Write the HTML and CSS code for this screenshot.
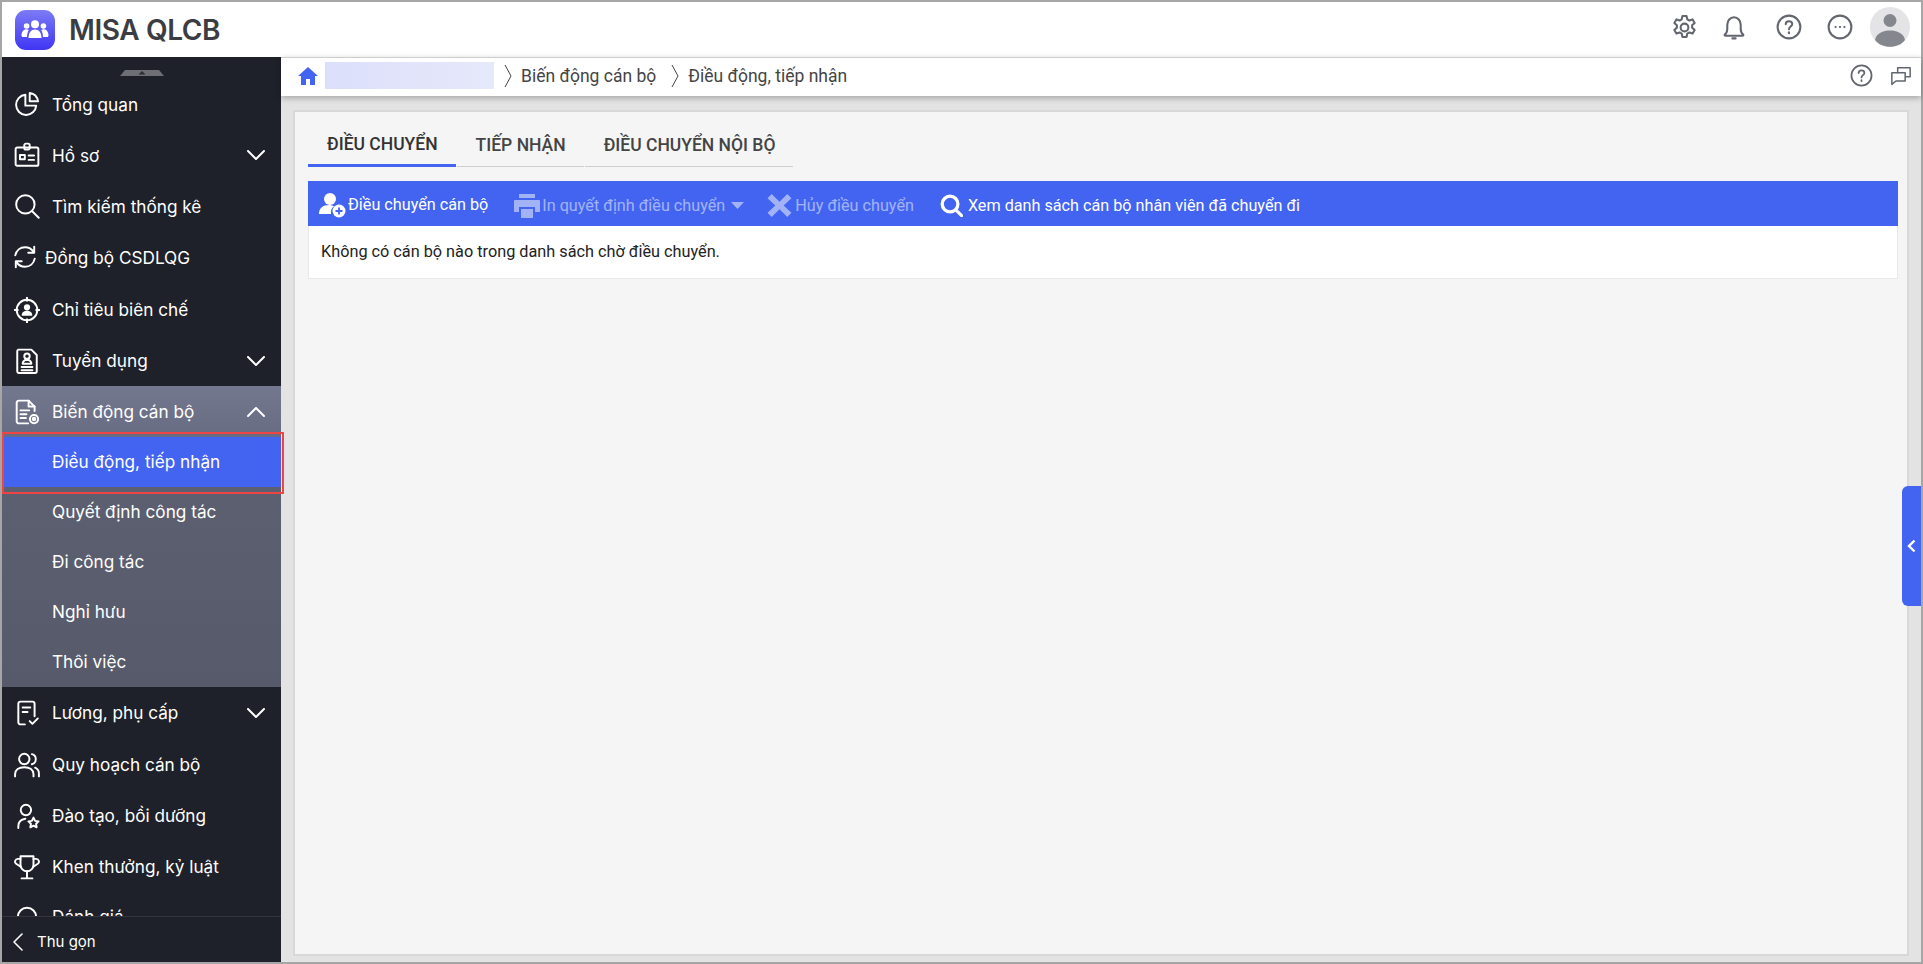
FILE: index.html
```html
<!DOCTYPE html>
<html lang="vi">
<head>
    <meta charset="UTF-8">
    <meta name="viewport" content="width=device-width, initial-scale=1.0">
    <title>MISA QLCB</title>
    <link rel="stylesheet" href="styles.css">
</head>
<body>
<div class="app">
    <header class="topbar">
        <div class="logo">
            <svg viewBox="0 0 40 40" width="40" height="40">
                <defs>
                    <linearGradient id="logoBg" x1="0" y1="0" x2="0" y2="1">
                        <stop offset="0" stop-color="#7d7bf5"/>
                        <stop offset="1" stop-color="#3f35f5"/>
                    </linearGradient>
                </defs>
                <rect width="40" height="40" rx="11" fill="url(#logoBg)"/>
                <g fill="#fff">
                    <circle cx="20" cy="14.2" r="4"/>
                    <circle cx="11.6" cy="16" r="2.8"/>
                    <circle cx="28.4" cy="16" r="2.8"/>
                    <path d="M13.5 28c0-5.5 2.6-8.6 6.5-8.6s6.500 3.100 6.500 8.600z"/>
                    <path d="M8 27c-1 0-1.500-.6-1.500-1.500 0-3.600 2-6.200 5-6.200 1 0 1.600.2 2.200.6-1 1.800-1.600 4.200-1.700 7.100z"/>
                    <path d="M32 27c1 0 1.500-.6 1.500-1.500 0-3.600-2-6.200-5-6.200-1 0-1.600.2-2.200.6 1 1.800 1.600 4.200 1.700 7.100z"/>
                </g>
            </svg>
            <span class="logo-text">MISA QLCB</span>
        </div>
        <div class="top-actions">
            <svg class="ic top-ic gear" viewBox="0 0 24 24" width="29" height="29"><circle cx="12" cy="12" r="3.200"/><path d="M10.300 2.500h3.400l.6 2.800 1.700.9 2.700-.9 1.700 3-2.100 1.900v1.900l2.100 1.900-1.700 3-2.700-.9-1.700.9-.6 2.800h-3.400l-.6-2.800-1.700-.9-2.700.9-1.700-3 2.100-1.900v-1.900L3.600 8.300l1.700-3 2.700.9 1.700-.9z"/></svg>
            <svg class="ic top-ic bell" viewBox="0 0 24 24" width="26" height="26"><path d="M3.500 19c1.800-1.500 2.300-3 2.300-5.500V10c0-3.800 2.600-7 6.200-7s6.200 3.200 6.200 7v3.500c0 2.500.5 4 2.300 5.500 .4.600 0 1-.6 1H4.100c-.6 0-1-.4-.6-1z"/><path d="M10.500 22.500h3"/></svg>
            <svg class="ic top-ic help" viewBox="0 0 24 24" width="26" height="26"><circle cx="12" cy="12" r="10.500"/><path d="M9 9.500c0-1.700 1.300-2.800 3-2.800s3 1.100 3 2.600c0 2.200-3 2.400-3 4.700"/><path d="M12 16.800v1"/></svg>
            <svg class="ic top-ic dots" viewBox="0 0 24 24" width="26" height="26"><circle cx="12" cy="12" r="10.500"/><path d="M7.800 12h.2M11.900 12h.2M16 12h.2"/></svg>
            <div class="avatar">
                <svg viewBox="0 0 40 40" width="40" height="40"><circle cx="20" cy="20" r="20" fill="#e4e4e6"/><circle cx="20" cy="13.500" r="6.500" fill="#85878f"/><path d="M5 33c1.500-7 8-9.500 15-9.500s13.500 2.500 15 9.500c-3.500 4.500-9 6.800-15 6.800S8.500 37.500 5 33z" fill="#85878f"/></svg>
            </div>
        </div>
    </header>

    <div class="body-row">
        <aside class="sidebar">
            <div class="menu">
                <svg class="handle" viewBox="0 0 44 6" width="44" height="6"><path d="M5 0h34l5 6H0z" fill="#6d6f75"/><path d="M22 1l3.500 3.500h-7z" fill="#2a2d34"/></svg>

                <a class="item item-up"><svg class="ic side-ic" viewBox="0 0 24 24" width="26" height="26"><path d="M10.500 3.500a9.300 9.300 0 1 0 10 10h-10z"/><path d="M14.500 1.800c4 .6 7 3.500 7.700 7.700h-7.700z"/></svg><span>Tổng quan</span></a>

                <a class="item item-up"><svg class="ic side-ic" viewBox="0 0 24 24" width="26" height="26"><rect x="1.500" y="5" width="21" height="17" rx="1.500"/><rect x="9.500" y="1.500" width="5" height="5.500" rx="1.500"/><rect x="5.500" y="12" width="4.500" height="4"/><path d="M13.500 12.500h5M13.500 16.500h5"/></svg><span>Hồ sơ</span><svg class="ic arrow" viewBox="0 0 18 10" width="18" height="10"><path d="M1 1l8 8 8-8"/></svg></a>

                <a class="item item-up"><svg class="ic side-ic" viewBox="0 0 24 24" width="26" height="26"><circle cx="10.500" cy="10.500" r="8.500"/><path d="M16.800 16.800l6 6"/></svg><span>Tìm kiếm thống kê</span></a>

                <a class="item item-up item-sync"><svg class="ic side-ic" viewBox="0 0 24 24" width="26" height="26"><path d="M3 10.500C4 6 7.500 3 12 3c3.500 0 6.300 1.700 8 4.500"/><path d="M20.500 2.500v5.500H15"/><path d="M21 13.500C20 18 16.500 21 12 21c-3.500 0-6.300-1.700-8-4.500"/><path d="M3.500 21.500V16H9"/></svg><span>Đồng bộ CSDLQG</span></a>

                <a class="item"><svg class="ic side-ic" viewBox="0 0 24 24" width="26" height="26"><circle cx="12" cy="12" r="9.500"/><path d="M12 .5v3M12 20.500v3M.5 12h3M20.500 12h3"/><circle cx="12" cy="9.500" r="2" fill="currentColor"/><path d="M8 16.500c.5-2 2-2.800 4-2.800s3.500.8 4 2.800z" fill="currentColor"/></svg><span>Chỉ tiêu biên chế</span></a>

                <a class="item"><svg class="ic side-ic" viewBox="0 0 24 24" width="26" height="26"><path d="M4 1.500h12l5 5v15a1.500 1.500 0 0 1-1.500 1.500h-15A1.500 1.500 0 0 1 3 21.500V3a1.500 1.500 0 0 1 1-1.500z"/><circle cx="12" cy="7.500" r="2.500"/><path d="M8 14.500c0-2 1.500-3 2.500-3.500h3c1 .5 2.500 1.500 2.500 3.500zM7 17.500h10M7 20.500h10"/></svg><span>Tuyển dụng</span><svg class="ic arrow" viewBox="0 0 18 10" width="18" height="10"><path d="M1 1l8 8 8-8"/></svg></a>

                <div class="group">
                    <a class="item item-open"><svg class="ic side-ic" viewBox="0 0 24 24" width="26" height="26"><path d="M13 22.500H4.500A2 2 0 0 1 2.500 20.500V3.500a2 2 0 0 1 2-2h9l5.500 5.500v4"/><path d="M13.500 1.500v5.500H19"/><path d="M6 10.500h8M6 14h5.500M6 17.500h5"/><circle cx="18.500" cy="18.500" r="1.200"/><circle cx="18.500" cy="18.500" r="3.800"/></svg><span>Biến động cán bộ</span><svg class="ic arrow" viewBox="0 0 18 10" width="18" height="10"><path d="M1 9l8-8 8 8"/></svg></a>
                    <a class="sub sub-active">Điều động, tiếp nhận</a>
                    <a class="sub">Quyết định công tác</a>
                    <a class="sub">Đi công tác</a>
                    <a class="sub">Nghỉ hưu</a>
                    <a class="sub">Thôi việc</a>
                </div>

                <a class="item"><svg class="ic side-ic" viewBox="0 0 24 24" width="26" height="26"><path d="M10 22.500H6a2 2 0 0 1-2-2V3.500a2 2 0 0 1 2-2h11a2 2 0 0 1 2 2V15"/><path d="M8 7h7M8 11h4.500"/><path d="M14.500 19.500l2.500 2.500 5-5"/></svg><span>Lương, phụ cấp</span><svg class="ic arrow" viewBox="0 0 18 10" width="18" height="10"><path d="M1 1l8 8 8-8"/></svg></a>

                <a class="item item-down"><svg class="ic side-ic" viewBox="0 0 24 24" width="26" height="26"><circle cx="9.500" cy="6.500" r="4.800"/><path d="M1 22.500v-2c0-4 3.500-6.500 8.500-6.500s8.500 2.500 8.500 6.500v2"/><path d="M16.500 2a4.800 4.800 0 0 1 0 9.300M19.500 14.500c2.300 1 3.500 3 3.500 5.500v2.500"/></svg><span>Quy hoạch cán bộ</span></a>

                <a class="item item-down"><svg class="ic side-ic" viewBox="0 0 24 24" width="26" height="26"><circle cx="11" cy="6.500" r="4.800"/><path d="M4 23v-1.500c0-3.800 2.500-6.500 6.500-7"/><path d="M18 13.500l1.500 3 3.200.5-2.300 2.200.5 3.200-2.900-1.500-2.900 1.500.5-3.200-2.300-2.200 3.200-.5z" fill="none"/></svg><span>Đào tạo, bồi dưỡng</span></a>

                <a class="item item-down"><svg class="ic side-ic" viewBox="0 0 24 24" width="26" height="26"><path d="M6 2h12v8a6 6 0 0 1-12 0z"/><path d="M6 4.500H3.500a2.500 2.500 0 0 0-1.500 4.500l4.500 3M18 4.500h2.500a2.500 2.500 0 0 1 1.500 4.500l-4.500 3"/><path d="M12 16v6M7 22.500h10"/></svg><span>Khen thưởng, kỷ luật</span></a>

                <a class="item"><svg class="ic side-ic" viewBox="0 0 24 24" width="26" height="26"><circle cx="12" cy="12" r="8.500"/></svg><span>Đánh giá</span></a>
            </div>
            <div class="side-foot">
                <svg class="ic foot-arrow" viewBox="0 0 11 18" width="11" height="18"><path d="M10 1L2 9l8 8"/></svg>
                <span>Thu gọn</span>
            </div>
        </aside>

        <main class="content">
            <nav class="crumbs">
                <svg class="home" viewBox="0 0 20 18" width="20" height="18"><path d="M10 0L0 9h3v9h5v-6h4v6h5V9h3z" fill="#4264f0"/></svg>
                <div class="blurred"></div>
                <svg class="sep" viewBox="0 0 8 24" width="8" height="24"><path d="M1 1l6 11-6 11"/></svg>
                <span>Biến động cán bộ</span>
                <svg class="sep" viewBox="0 0 8 24" width="8" height="24"><path d="M1 1l6 11-6 11"/></svg>
                <span>Điều động, tiếp nhận</span>
                <div class="crumb-right">
                    <svg class="ic crumb-ic" viewBox="0 0 24 24" width="23" height="23"><circle cx="12" cy="12" r="10.500"/><path d="M9 9.500c0-1.700 1.300-2.800 3-2.800s3 1.100 3 2.600c0 2.200-3 2.400-3 4.700"/><path d="M12 16.800v1"/></svg>
                    <svg class="ic crumb-ic" viewBox="0 0 24 24" width="20" height="20"><path d="M8 8V2h15v11h-5"/><path d="M1 8h16v10H6l-5 4z"/></svg>
                </div>
            </nav>

            <div class="panel-wrap">
                <section class="panel">
                    <div class="tabs">
                        <div class="tab tab-active">ĐIỀU CHUYỂN</div>
                        <div class="tab">TIẾP NHẬN</div>
                        <div class="tab">ĐIỀU CHUYỂN NỘI BỘ</div>
                    </div>
                    <div class="toolbar">
                        <div class="tool tool-add">
                            <svg viewBox="0 0 27 26" width="27" height="26"><circle cx="11" cy="7" r="6" fill="#fff"/><path d="M0 22c0-6 4-9 10-9 2 0 4 .5 5 1.500-2.500 1.500-3.500 4-3 7.500z" fill="#fff"/><circle cx="20" cy="19" r="6.500" fill="#fff"/><path d="M20 15.500v7M16.500 19h7" stroke="#4264f0" stroke-width="1.800"/></svg>
                            <span>Điều chuyển cán bộ</span>
                        </div>
                        <div class="tool tool-off tool-print">
                            <svg viewBox="0 0 26 24" width="26" height="24"><path d="M5 0h16v4H5z M1 6h24a1 1 0 0 1 1 1v11h-5v-5H5v5H0V7a1 1 0 0 1 1-1z M7 15h12v9H7z" fill="#fff"/></svg>
                            <span>In quyết định điều chuyển</span>
                            <svg class="caret" viewBox="0 0 13 7" width="13" height="7"><path d="M0 0h13L6.500 7z" fill="#fff"/></svg>
                        </div>
                        <div class="tool tool-off tool-cancel">
                            <svg viewBox="0 0 24 24" width="25" height="25"><path d="M4.500 1L12 8.500 19.500 1 23.500 5 16 12l7.500 7-4 4L12 15.500 4.500 23l-4-4L8 12 .5 5z" fill="#fff"/></svg>
                            <span>Hủy điều chuyển</span>
                        </div>
                        <div class="tool tool-search">
                            <svg viewBox="0 0 24 24" width="23" height="23"><circle cx="10.500" cy="10.500" r="8.200" fill="none" stroke="#fff" stroke-width="3.400"/><path d="M16.500 16.500l6 6" stroke="#fff" stroke-width="3.400" stroke-linecap="round"/></svg>
                            <span>Xem danh sách cán bộ nhân viên đã chuyển đi</span>
                        </div>
                    </div>
                    <div class="empty">Không có cán bộ nào trong danh sách chờ điều chuyển.</div>
                </section>
                <div class="side-tab">
                    <svg viewBox="0 0 9 14" width="9" height="14"><path d="M7.500 1.500L2 7l5.500 5.500" fill="none" stroke="#fff" stroke-width="2.400"/></svg>
                </div>
            </div>
        </main>
    </div>
</div>
</body>
</html>
```

FILE: styles.css
```css
* {
    box-sizing: border-box;
}
body {
    margin: 0;
    font-family: Inter, Arial, sans-serif;
    overflow: hidden;
}
.app {
    height: 964px;
    border: 2px solid #a6a6a6;
    display: flex;
    flex-direction: column;
    background-color: #fff;
}
.ic {
    fill: none;
    stroke: currentColor;
    stroke-width: 1.8;
    stroke-linecap: round;
    stroke-linejoin: round;
    flex: none;
}

/* top bar */
.topbar {
    height: 55px;
    flex: none;
    display: flex;
    align-items: center;
    justify-content: space-between;
    padding: 0 11px 0 13px;
}
.logo {
    display: flex;
    align-items: center;
    gap: 14px;
}
.logo-text {
    font-family: Inter, sans-serif;
    font-size: 28px;
    font-weight: 600;
    letter-spacing: -0.4px;
    color: #3b3d42;
}
.top-actions {
    display: flex;
    align-items: center;
    margin-bottom: 5px;
    color: #62666e;
}
.top-ic {
    stroke-width: 1.9;
}
.gear {
    margin-right: 22px;
    stroke-width: 1.7;
}
.bell {
    margin-right: 29px;
}
.help {
    margin-right: 25px;
}
.dots {
    margin-right: 17px;
}
.avatar {
    height: 40px;
}

.body-row {
    flex: 1;
    min-height: 0;
    display: flex;
}

/* sidebar */
.sidebar {
    width: 279px;
    flex: none;
    display: flex;
    flex-direction: column;
    background-color: #1e2129;
    color: #fff;
}
.menu {
    flex: 1;
    min-height: 0;
    padding-top: 23px;
    position: relative;
}
.handle {
    position: absolute;
    top: 13px;
    left: 118px;
}
.item {
    height: 51px;
    display: flex;
    align-items: center;
    padding-left: 12px;
    font-size: 17.2px;
    color: #fff;
}
.item-up {
    padding-bottom: 3px;
}
.item-down {
    padding-top: 2px;
}
.side-ic {
    margin-right: 12px;
}
.item-sync {
    padding-left: 10px;
}
.item-sync .side-ic {
    margin-right: 7px;
}
.arrow {
    margin-left: auto;
    margin-right: 16px;
    stroke-width: 2;
}
.group {
    background-color: #585c6c;
    background-image: linear-gradient(#5e6274, #565a6a);
}
.item-open {
    background-image: linear-gradient(#74788f, #686c82);
}
.sub {
    display: flex;
    align-items: center;
    height: 50px;
    padding-left: 50px;
    padding-bottom: 2px;
    font-size: 17.2px;
    color: #fff;
    position: relative;
}
.sub-active {
    background-color: #4264f0;
}
.sub-active::after {
    content: "";
    position: absolute;
    left: 0;
    right: -3px;
    top: -5px;
    bottom: -7px;
    border: 2px solid #ef4444;
}
.side-foot {
    height: 46px;
    flex: none;
    position: relative;
    z-index: 1;
    display: flex;
    align-items: center;
    padding-left: 10px;
    padding-top: 4px;
    gap: 14px;
    background-color: #1e2129;
    border-top: 1px solid #33363e;
    font-size: 15px;
}
.foot-arrow {
    stroke-width: 1.6;
}

/* breadcrumb */
.content {
    flex: 1;
    min-width: 0;
    display: flex;
    flex-direction: column;
    background-color: #e3e3e3;
}
.crumbs {
    height: 39px;
    flex: none;
    display: flex;
    align-items: center;
    padding: 0 10px 3px 17px;
    background-color: #fff;
    border-top: 1px solid #cfcfcf;
    box-shadow: 0 2px 6px rgba(0, 0, 0, 0.28);
    position: relative;
    font-family: Roboto, sans-serif;
    font-size: 17.5px;
    color: #444;
}
.home {
    margin-right: 7px;
}
.blurred {
    width: 169px;
    height: 27px;
    margin-right: 10px;
    background-image: linear-gradient(90deg, #dcdffa, #e6e9fa);
}
.sep {
    fill: none;
    stroke: #444;
    stroke-width: 1;
    margin-right: 9px;
}
.crumbs span + .sep {
    margin-left: 15px;
}
.crumb-right {
    margin-left: auto;
    display: flex;
    align-items: center;
    gap: 18px;
    color: #62666e;
}

/* panel */
.panel-wrap {
    flex: 1;
    min-height: 0;
    padding: 14px 12px 6px 12px;
    position: relative;
}
.panel {
    height: 100%;
    background-color: #f5f5f5;
    border: 2px solid #d8d8d8;
    padding: 14px 9px 0 13px;
    font-family: Roboto, sans-serif;
}
.tabs {
    display: flex;
    gap: 1px;
    margin-bottom: 14px;
}
.tab {
    height: 41px;
    padding: 0 18px 3px 19px;
    display: flex;
    align-items: center;
    font-size: 17.5px;
    font-weight: 500;
    color: #444;
    border-bottom: 1px solid #cfcfcf;
}
.tab-active {
    color: #333;
    border-bottom: 3px solid #4264f0;
    padding-bottom: 2px;
}
.toolbar {
    height: 45px;
    display: flex;
    align-items: center;
    padding: 4px 0 0 11px;
    background-color: #4264f0;
    color: #fff;
    font-size: 16.2px;
}
.tool {
    display: flex;
    align-items: center;
    gap: 2px;
}
.tool-add {
    margin-top: -2px;
}
.tool-off {
    opacity: 0.5;
}
.tool-print {
    margin-left: 26px;
}
.caret {
    margin-left: 4px;
}
.tool-cancel {
    margin-left: 23px;
    gap: 3px;
}
.tool-search {
    margin-left: 26px;
    gap: 5px;
}
.empty {
    height: 53px;
    display: flex;
    align-items: center;
    padding: 0 0 2px 12px;
    background-color: #fff;
    border: 1px solid #e8e8e8;
    border-top: none;
    font-size: 16.25px;
    color: #222;
}
.side-tab {
    position: absolute;
    right: 0;
    top: 390px;
    width: 19px;
    height: 120px;
    display: flex;
    align-items: center;
    justify-content: center;
    background-color: #4264f0;
    border-radius: 6px 0 0 6px;
}
```
